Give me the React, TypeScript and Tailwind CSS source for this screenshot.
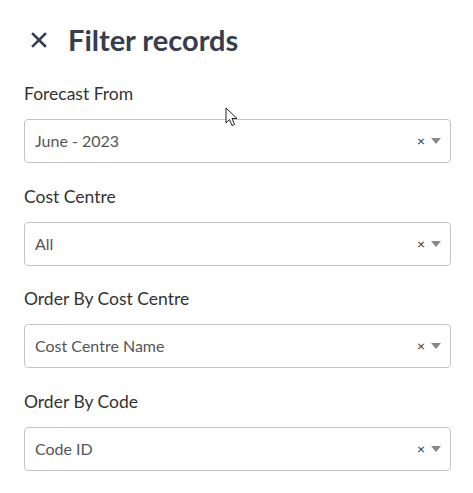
import React from "react";

const fields = [
  { label: "Forecast From", value: "June - 2023" },
  { label: "Cost Centre", value: "All" },
  { label: "Order By Cost Centre", value: "Cost Centre Name" },
  { label: "Order By Code", value: "Code ID" },
];

function Select({ value }: { value: string }) {
  return (
    <div className="flex h-[44px] items-center rounded-[4px] border border-[#c4c4c4] bg-white pl-[10px] pr-[8px]">
      <span className="flex-1 text-[16px] text-[#555555]">{value}</span>
      <span className="mr-[6px] text-[14px] leading-none text-[#333333]">×</span>
      <svg width="10" height="6" viewBox="0 0 10 6" className="mr-[1px]">
        <path d="M0 0h10L5 6z" fill="#888888" />
      </svg>
    </div>
  );
}

export default function App() {
  return (
    <div
      className="relative h-[493px] w-[473px] bg-white pl-[24px] pr-[22px] pt-[21px]"
      style={{ fontFamily: "Lato, 'Noto Sans', sans-serif" }}
    >
      <div className="flex items-center">
        <svg width="16" height="16" viewBox="0 0 16 16" className="ml-[7px] mr-[21px]">
          <path d="M2 2L14 14M14 2L2 14" stroke="#373d4f" strokeWidth="2.6" strokeLinecap="square" />
        </svg>
        <h1 className="text-[29px] font-bold leading-[38px] text-[#373d4f]">Filter records</h1>
      </div>
      <div className="mt-[23px] flex flex-col gap-[21.5px]">
        {fields.map((f) => (
          <div key={f.label} className="flex flex-col gap-[13px]">
            <div className="text-[17.5px] leading-[24px] text-[#333333]">{f.label}</div>
            <Select value={f.value} />
          </div>
        ))}
      </div>
      <svg
        width="14"
        height="20"
        viewBox="0 0 14 20"
        className="absolute left-[225px] top-[107px]"
      >
        <path
          d="M1 1L1 16L4.5 12.5L7 18.5L9.5 17.5L7 11.5L12 11.5Z"
          fill="white"
          stroke="#222"
          strokeWidth="1"
          strokeLinejoin="round"
        />
      </svg>
    </div>
  );
}
